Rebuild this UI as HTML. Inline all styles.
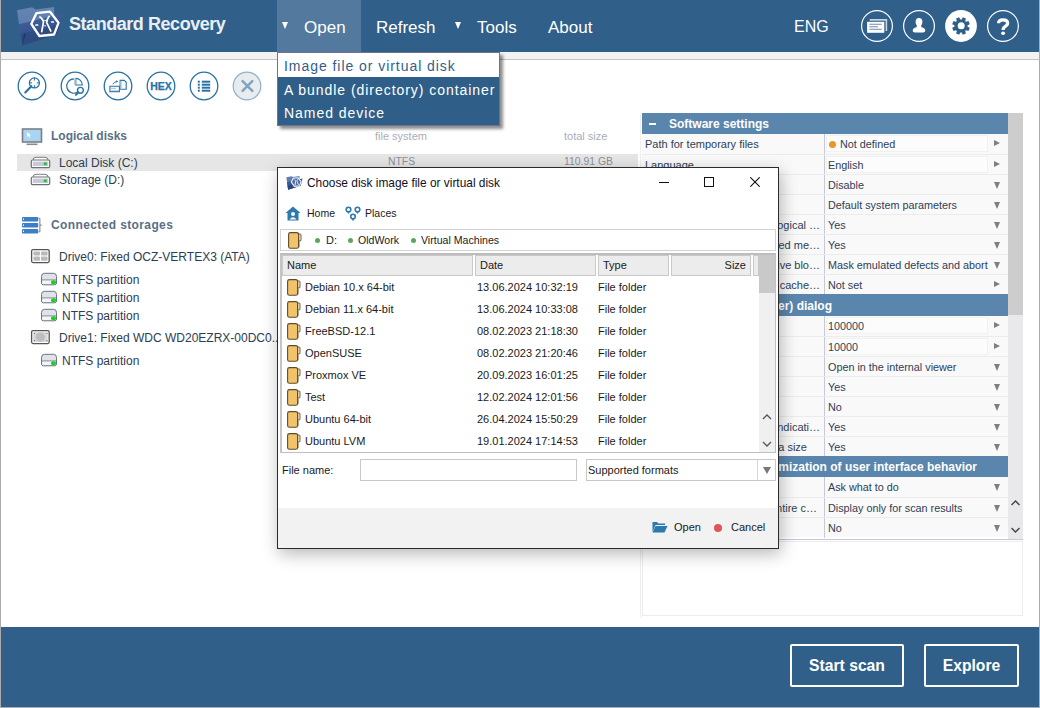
<!DOCTYPE html>
<html><head><meta charset="utf-8">
<style>
*{margin:0;padding:0;box-sizing:border-box}
html,body{width:1040px;height:708px;overflow:hidden;background:#fff;font-family:"Liberation Sans",sans-serif}
.a{position:absolute;white-space:pre}
#win{position:absolute;left:0;top:0;width:1040px;height:708px;background:#fff}
.bd{position:absolute;background:#ababab;z-index:50}
#hdr{position:absolute;left:0;top:0;width:1040px;height:52px;background:#305f89}
.menu{position:absolute;top:2px;height:52px;color:#fff;font-size:17px;line-height:52px;letter-spacing:0}
.tri{position:absolute;width:0;height:0;border-left:3.5px solid transparent;border-right:3.5px solid transparent;border-top:7px solid #fff}
.hc{position:absolute;top:10px;width:32px;height:32px;border-radius:50%;border:1.3px solid #fff}
#strip{position:absolute;left:0;top:52px;width:1040px;height:8px;background:#f2f2f2;border-bottom:1px solid #c4c4c4}
.tc{position:absolute;top:72px;width:29px;height:29px;border-radius:50%;border:1.4px solid #2e78aa}
.lp{color:#2b3d52;font-size:12px}
#foot{position:absolute;left:0;top:627px;width:1040px;height:80px;background:#305f89}
.btn{position:absolute;top:644px;height:43px;border:2px solid #fff;border-radius:2px;color:#fff;font-weight:bold;font-size:15.7px;line-height:40px;text-align:center}

#sp{position:absolute;left:642px;top:113px;width:381px;height:426px;background:#fff}
.sh{position:absolute;left:0;width:366px;height:21px;background:#5a86ae;color:#fff;font-weight:bold;font-size:12px;line-height:21px}
.sr{position:absolute;left:0;width:366px;height:20px;background:#f9f9f9;font-size:11px;line-height:21px;color:#2e4057}
.sl{position:absolute;left:3px;top:0;white-space:pre}
.slr{position:absolute;right:188px;top:0;white-space:pre}
.sv{position:absolute;left:186px;top:0;white-space:pre;font-size:10.8px}
.sa{position:absolute;left:352px;top:6px;width:0;height:0;border-top:3.5px solid transparent;border-bottom:3.5px solid transparent;border-left:6px solid #7f7f7f}
.sd{position:absolute;left:352px;top:7px;width:0;height:0;border-left:3.5px solid transparent;border-right:3.5px solid transparent;border-top:7px solid #7f7f7f}
.scol{position:absolute;left:182px;top:0;width:1px;height:20px;background:#c5cad6}

#dlg{position:absolute;left:277px;top:167px;width:502px;height:382px;background:#fff;border:1px solid #2b2b2b;box-shadow:2px 5px 16px rgba(0,0,0,0.28);z-index:20;font-size:11px;color:#1a1a1a}
#dlg .a{position:absolute;white-space:pre}
.fi{position:absolute;width:13px;height:16px;background:#f1c36b;border:1px solid #6e5a36;border-radius:2px 0 0 2px}
.fi:after{content:"";position:absolute;right:-4px;top:1px;width:2px;height:9px;border-right:1px solid #6e5a36}
.lr{position:absolute;left:0;width:477px;height:22px;line-height:22px}
.hcell{position:absolute;top:0;height:21px;background:#ececec;border:1px solid #c9c9c9;line-height:18px}
</style></head><body>
<div id="win">
  <div id="hdr">
    <!-- logo -->
    <svg class="a" style="left:14px;top:4px" width="52" height="44" viewBox="0 0 52 44">
      <defs>
        <linearGradient id="lg1" x1="0" y1="0" x2="0" y2="1"><stop offset="0" stop-color="#6585b4"/><stop offset="1" stop-color="#5474a8"/></linearGradient>
        <linearGradient id="lg2" x1="0" y1="0" x2="0.3" y2="1"><stop offset="0" stop-color="#4563a0"/><stop offset="1" stop-color="#2c4a83"/></linearGradient>
      </defs>
      <path d="M3 6.3 L18 3.3 L21.7 5.5 L40 3 L41 26 L8 41.5 Z" fill="url(#lg1)"/>
      <path d="M4.8 20.2 L48.9 9.6 L43 30.5 L8.1 41.5 Z" fill="url(#lg2)"/>
      <path d="M6.5 30 L46 20.5 L43 30.5 L8.1 41.5 Z" fill="#2d4a80" opacity="0.8"/>
      <path d="M8.1 41.5 L10 30 L12 29.5 Z" fill="#1e3566"/>
      <polygon points="17.3,19.9 22.4,9.2 36,7.7 44.5,18.8 40,30.5 25.4,32" fill="none" stroke="#fff" stroke-width="2.3" stroke-linejoin="round"/>
      <path d="M25.4 12.5 Q29.6 15.5 29.4 18.5 L27.6 28.3" fill="none" stroke="#fff" stroke-width="1.7"/>
      <path d="M35.6 11.8 Q32.5 15.5 32.7 18.5 L37.1 27.6" fill="none" stroke="#fff" stroke-width="1.7"/>
      <path d="M21.3 21 H24.3 M37.1 18 H40" stroke="#fff" stroke-width="1.5"/>
      <circle cx="31" cy="16.5" r="0.8" fill="#fff"/><circle cx="31" cy="21.7" r="0.8" fill="#fff"/>
    </svg>
    <div class="a" style="left:69px;top:12px;color:#e9eff6;font-weight:bold;font-size:18px;letter-spacing:-0.45px;line-height:24px">Standard Recovery</div>
    <div class="a" style="left:277px;top:0;width:84px;height:52px;background:#53799e"></div>
    <div class="tri" style="left:282px;top:22px"></div>
    <div class="menu" style="left:304px">Open</div>
    <div class="menu" style="left:376px">Refresh</div>
    <div class="tri" style="left:455px;top:22px"></div>
    <div class="menu" style="left:477px">Tools</div>
    <div class="menu" style="left:548px">About</div>
    <div class="menu" style="left:794px;top:1px;font-size:16px">ENG</div>
    <svg class="a" style="left:861px;top:10px" width="32" height="32" viewBox="0 0 32 32">
      <circle cx="16" cy="16" r="15.4" fill="none" stroke="#fff" stroke-width="1.2"/>
      <path d="M8.7 9.9 L25.4 9.9 L25.4 21" fill="none" stroke="#c9d3dd" stroke-width="1.6"/>
      <rect x="6.1" y="11.8" width="17.2" height="11" fill="#fff"/>
      <path d="M8.4 14.3 H20.7 M8.4 16.7 H17 M8.4 19.3 H20.7" stroke="#6d8cab" stroke-width="1.1"/>
    </svg>
    <svg class="a" style="left:903px;top:10px" width="32" height="32" viewBox="0 0 32 32">
      <circle cx="16" cy="16" r="15.4" fill="none" stroke="#fff" stroke-width="1.2"/>
      <ellipse cx="16" cy="12" rx="3.4" ry="3.9" fill="#fff"/>
      <path d="M14 15 L18 15 L18.5 17.2 Q22.3 18 22.3 20.7 Q22.3 22.4 20 22.4 L12 22.4 Q9.7 22.4 9.7 20.7 Q9.7 18 13.5 17.2 Z" fill="#fff"/>
    </svg>
    <svg class="a" style="left:945px;top:10px" width="32" height="32" viewBox="0 0 32 32">
      <circle cx="16" cy="16" r="15.9" fill="#fff"/>
      <path d="M22.57 16.68 L24.82 17.81 L23.51 20.95 L21.12 20.16 L20.16 21.12 L20.95 23.51 L17.81 24.82 L16.68 22.57 L15.32 22.57 L14.19 24.82 L11.05 23.51 L11.84 21.12 L10.88 20.16 L8.49 20.95 L7.18 17.81 L9.43 16.68 L9.43 15.32 L7.18 14.19 L8.49 11.05 L10.88 11.84 L11.84 10.88 L11.05 8.49 L14.19 7.18 L15.32 9.43 L16.68 9.43 L17.81 7.18 L20.95 8.49 L20.16 10.88 L21.12 11.84 L23.51 11.05 L24.82 14.19 L22.57 15.32 Z" fill="#305f89"/>
      <circle cx="16.2" cy="15.8" r="3.5" fill="#fff"/>
    </svg>
    <svg class="a" style="left:987px;top:10px" width="32" height="32" viewBox="0 0 32 32">
      <circle cx="16" cy="16" r="15.4" fill="none" stroke="#fff" stroke-width="1.2"/>
      <path d="M11.6 13.3 Q11.6 9.9 16.1 9.9 Q20.6 9.9 20.6 13.1 Q20.6 15.2 18.3 16.4 Q16.1 17.6 16.1 19.9" fill="none" stroke="#fff" stroke-width="3.2"/><ellipse cx="16.1" cy="23.2" rx="2" ry="1.8" fill="#fff"/>
    </svg>
  </div>
  <div id="strip"></div>

  <!-- toolbar -->
  <svg class="a" style="left:16.25px;top:70.3px" width="32" height="32" viewBox="0 0 32 32"><circle cx="16" cy="16" r="13.8" fill="none" stroke="#2a72a3" stroke-width="1.3"/><circle cx="18.4" cy="12.9" r="5" fill="none" stroke="#2a72a3" stroke-width="1.3"/><path d="M18.4 7.9 V10.6 M18.4 15.2 V17.9 M13.4 12.9 H16.1 M20.7 12.9 H23.4" stroke="#2a72a3" stroke-width="1"/><path d="M15.3 16.2 L9.3 22.4" stroke="#2a72a3" stroke-width="2.1" stroke-linecap="round"/></svg>
  <svg class="a" style="left:59.20px;top:70.3px" width="32" height="32" viewBox="0 0 32 32"><circle cx="16" cy="16" r="13.8" fill="none" stroke="#2a72a3" stroke-width="1.3"/><path d="M15 8.8 A7.2 7.2 0 1 0 18.8 22.1" fill="none" stroke="#2a72a3" stroke-width="1.2"/><path d="M16.8 8.4 L16.8 15 L23.3 15 A6.6 6.6 0 0 0 16.8 8.4 Z" fill="none" stroke="#2a72a3" stroke-width="1.1"/><rect x="15.4" y="8.3" width="1.6" height="6.8" fill="#8fb5d0"/><circle cx="21.4" cy="20.3" r="2.9" fill="none" stroke="#2a72a3" stroke-width="1.4"/><path d="M19.4 22.4 L16.9 24.8" stroke="#2a72a3" stroke-width="2" stroke-linecap="round"/></svg>
  <svg class="a" style="left:102.30px;top:70.3px" width="32" height="32" viewBox="0 0 32 32"><circle cx="16" cy="16" r="13.8" fill="none" stroke="#2a72a3" stroke-width="1.3"/><path d="M18.1 10.4 H22.3 L24.2 12.3 V19.3 H18.1 Z" fill="#fff" stroke="#2a72a3" stroke-width="1.1"/><rect x="18.6" y="10.9" width="1.6" height="8" fill="#c5dbe9"/><path d="M7.9 16.2 H17.4 V21.6 H7.9 Z" fill="#fff" stroke="#2a72a3" stroke-width="1.1"/><path d="M8.4 18.3 H14 M8.4 20.8 H17" stroke="#9cc0d8" stroke-width="1"/><path d="M10.8 14.2 Q12.3 11.9 14.6 11.5" fill="none" stroke="#2a72a3" stroke-width="1"/><path d="M14 10.3 L16.3 11.2 L14.3 12.8 Z" fill="#2a72a3"/></svg>
  <svg class="a" style="left:145.20px;top:70.3px" width="32" height="32" viewBox="0 0 32 32"><circle cx="16" cy="16" r="13.8" fill="none" stroke="#2a72a3" stroke-width="1.3"/><text x="16" y="19.9" text-anchor="middle" font-family="Liberation Sans" font-weight="bold" font-size="10.5" fill="#2a72a3" stroke="#2a72a3" stroke-width="0.25">HEX</text></svg>
  <svg class="a" style="left:188.20px;top:70.3px" width="32" height="32" viewBox="0 0 32 32"><circle cx="16" cy="16" r="13.8" fill="none" stroke="#2a72a3" stroke-width="1.3"/><rect x="9.8" y="10.7" width="2" height="2" fill="#2a72a3"/><rect x="13.8" y="10.7" width="8.4" height="2" fill="#2a72a3"/><rect x="9.8" y="13.7" width="2" height="2" fill="#2a72a3"/><rect x="13.8" y="13.7" width="8.4" height="2" fill="#2a72a3"/><rect x="9.8" y="16.7" width="2" height="2" fill="#2a72a3"/><rect x="13.8" y="16.7" width="8.4" height="2" fill="#2a72a3"/><rect x="9.8" y="19.7" width="2" height="2" fill="#2a72a3"/><rect x="13.8" y="19.7" width="8.4" height="2" fill="#2a72a3"/></svg>
  <svg class="a" style="left:231.20px;top:70.3px" width="32" height="32" viewBox="0 0 32 32"><circle cx="16" cy="16" r="13.8" fill="#e9ecef" stroke="#8fb2ca" stroke-width="1.2"/><path d="M11.6 11.2 L21.3 20.9 M21.3 11.2 L11.6 20.9" stroke="#7ea5c0" stroke-width="2.5" stroke-linecap="round"/></svg>

  <!-- left panel -->
  <div class="a" style="left:51px;top:129px;font-weight:bold;font-size:12px;color:#5b6f84">Logical disks</div>
  <div class="a" style="left:375px;top:130px;font-size:11px;color:#a9adb7">file system</div>
  <div class="a" style="left:564px;top:130px;font-size:11px;color:#a9adb7">total size</div>
  <div class="a" style="left:17px;top:154px;width:621px;height:17px;background:#e6e6e6"></div>
  <div class="a lp" style="left:59px;top:156px">Local Disk (C:)</div>
  <div class="a" style="left:388px;top:156px;font-size:10.4px;color:#8a909b">NTFS</div>
  <div class="a" style="left:564px;top:156px;font-size:10.4px;color:#8a909b">110.91 GB</div>
  <div class="a lp" style="left:59px;top:173px">Storage (D:)</div>
  <div class="a" style="left:51px;top:218px;font-weight:bold;font-size:12px;letter-spacing:0.38px;color:#5b6f84">Connected storages</div>
  <div class="a lp" style="left:59px;top:250px">Drive0: Fixed OCZ-VERTEX3 (ATA)</div>
  <div class="a lp" style="left:62px;top:273px">NTFS partition</div>
  <div class="a lp" style="left:62px;top:291px">NTFS partition</div>
  <div class="a lp" style="left:62px;top:309px">NTFS partition</div>
  <div class="a lp" style="left:59px;top:331px">Drive1: Fixed WDC WD20EZRX-00DC0...</div>
  <div class="a lp" style="left:62px;top:354px">NTFS partition</div>



  <!-- left icons -->
  <svg class="a" style="left:21px;top:128px" width="22" height="19" viewBox="0 0 22 19">
    <rect x="1.5" y="1" width="19" height="13" fill="#a9d5f3" stroke="#7c7f87" stroke-width="1.6"/>
    <path d="M5.5 16.3 H16.5" stroke="#8a8d94" stroke-width="1.6"/>
    <path d="M6 4 L6 9 L7.4 7.8 L8.6 10 L9.3 9.6 L8.3 7.4 L10 7.2 Z" fill="#fff"/>
  </svg>
  <svg class="a" style="left:30px;top:156px" width="22" height="13" viewBox="0 0 22 13">
    <path d="M3 4 Q3 1.3 6 1.3 H15 Q18 1.3 18 4" fill="#fff" stroke="#7b7e88" stroke-width="1"/>
    <rect x="1.3" y="4" width="18.4" height="7.6" rx="1.3" fill="#fff" stroke="#6d707a" stroke-width="1.2"/>
    <rect x="2.8" y="5.6" width="15.4" height="4.4" fill="#c8c9d6"/>
    <rect x="13.8" y="6.4" width="3" height="2.8" fill="#26c33a"/>
  </svg>
  <svg class="a" style="left:30px;top:173px" width="22" height="13" viewBox="0 0 22 13">
    <path d="M3 4 Q3 1.3 6 1.3 H15 Q18 1.3 18 4" fill="#fff" stroke="#7b7e88" stroke-width="1"/>
    <rect x="1.3" y="4" width="18.4" height="7.6" rx="1.3" fill="#fff" stroke="#6d707a" stroke-width="1.2"/>
    <rect x="2.8" y="5.6" width="15.4" height="4.4" fill="#c8c9d6"/>
    <rect x="13.8" y="6.4" width="3" height="2.8" fill="#26c33a"/>
  </svg>
  <svg class="a" style="left:21px;top:216px" width="22" height="19" viewBox="0 0 22 19">
    <rect x="1" y="1" width="16.2" height="4.5" rx="0.8" fill="#3d7fc6"/>
    <rect x="1" y="7" width="16.2" height="4.5" rx="0.8" fill="#3d7fc6"/>
    <rect x="1" y="13" width="16.2" height="4.5" rx="0.8" fill="#3d7fc6"/>
    <rect x="2" y="2.5" width="1" height="1.5" fill="#fff"/><rect x="2" y="8.5" width="1" height="1.5" fill="#fff"/><rect x="2" y="14.5" width="1" height="1.5" fill="#fff"/>
    <path d="M17.5 2.3 H18.9 V15.8 H17.5 M18.9 9.1 H20.8" fill="none" stroke="#7a7a88" stroke-width="1"/>
  </svg>
  <svg class="a" style="left:30px;top:248px" width="21" height="16" viewBox="0 0 21 16">
    <rect x="1.6" y="1.6" width="17.6" height="13" rx="1.5" fill="#fff" stroke="#555" stroke-width="1.3"/>
    <rect x="3.4" y="3.4" width="6.6" height="4.2" rx="1" fill="#b9b9b9"/><rect x="11" y="3.4" width="6.6" height="4.2" rx="1" fill="#b9b9b9"/>
    <rect x="3.4" y="8.6" width="6.6" height="4.2" rx="1" fill="#b9b9b9"/><rect x="11" y="8.6" width="6.6" height="4.2" rx="1" fill="#b9b9b9"/>
  </svg>
  <svg class="a" style="left:30px;top:329px" width="21" height="16" viewBox="0 0 21 16">
    <rect x="1.6" y="1.6" width="17.6" height="13" rx="1.5" fill="#fff" stroke="#555" stroke-width="1.3"/>
    <rect x="3.2" y="3.2" width="14.4" height="9.8" fill="#d8d8d8"/>
    <circle cx="10.4" cy="8.1" r="4.6" fill="#bdbdc2" stroke="#c9c9cc" stroke-width="0.6"/>
    <circle cx="4.5" cy="4.5" r="0.6" fill="#666"/><circle cx="17" cy="4.5" r="0.6" fill="#666"/><circle cx="4.5" cy="11.7" r="0.6" fill="#666"/><circle cx="17" cy="11.7" r="0.6" fill="#666"/>
  </svg>
  <svg class="a" style="left:40px;top:272px" width="18" height="14" viewBox="0 0 18 14">
    <path d="M1.5 11 V4.5 Q1.5 1.3 4.5 1.3 H13.5 Q16.5 1.3 16.5 4.5 V11 Q16.5 12.8 14.5 12.8 H3.5 Q1.5 12.8 1.5 11 Z" fill="#dfe2ea" stroke="#6f7380" stroke-width="1"/>
    <path d="M1.5 8 H16.5" stroke="#6f7380" stroke-width="0.9"/>
    <rect x="2.3" y="8.6" width="13.4" height="3.3" fill="#f4f5f8"/>
    <rect x="11" y="8.3" width="5" height="4" rx="1.8" fill="#16d31d"/>
  </svg>
  <svg class="a" style="left:40px;top:290px" width="18" height="14" viewBox="0 0 18 14">
    <path d="M1.5 11 V4.5 Q1.5 1.3 4.5 1.3 H13.5 Q16.5 1.3 16.5 4.5 V11 Q16.5 12.8 14.5 12.8 H3.5 Q1.5 12.8 1.5 11 Z" fill="#dfe2ea" stroke="#6f7380" stroke-width="1"/>
    <path d="M1.5 8 H16.5" stroke="#6f7380" stroke-width="0.9"/>
    <rect x="2.3" y="8.6" width="13.4" height="3.3" fill="#f4f5f8"/>
    <rect x="11" y="8.3" width="5" height="4" rx="1.8" fill="#16d31d"/>
  </svg>
  <svg class="a" style="left:40px;top:308px" width="18" height="14" viewBox="0 0 18 14">
    <path d="M1.5 11 V4.5 Q1.5 1.3 4.5 1.3 H13.5 Q16.5 1.3 16.5 4.5 V11 Q16.5 12.8 14.5 12.8 H3.5 Q1.5 12.8 1.5 11 Z" fill="#dfe2ea" stroke="#6f7380" stroke-width="1"/>
    <path d="M1.5 8 H16.5" stroke="#6f7380" stroke-width="0.9"/>
    <rect x="2.3" y="8.6" width="13.4" height="3.3" fill="#f4f5f8"/>
    <rect x="11" y="8.3" width="5" height="4" rx="1.8" fill="#16d31d"/>
  </svg>
  <svg class="a" style="left:40px;top:353px" width="18" height="14" viewBox="0 0 18 14">
    <path d="M1.5 11 V4.5 Q1.5 1.3 4.5 1.3 H13.5 Q16.5 1.3 16.5 4.5 V11 Q16.5 12.8 14.5 12.8 H3.5 Q1.5 12.8 1.5 11 Z" fill="#dfe2ea" stroke="#6f7380" stroke-width="1"/>
    <path d="M1.5 8 H16.5" stroke="#6f7380" stroke-width="0.9"/>
    <rect x="2.3" y="8.6" width="13.4" height="3.3" fill="#f4f5f8"/>
    <rect x="11" y="8.3" width="5" height="4" rx="1.8" fill="#16d31d"/>
  </svg>

  <!-- settings panel -->
  <div id="sp">
    <div class="sh" style="top:0px"><span style="position:absolute;left:7px;top:10px;width:7px;height:2.4px;background:#fff"></span><span style="position:absolute;left:27px;top:1px">Software settings</span></div>
    <div class="sr" style="top:21px"><span class="sl">Path for temporary files</span><span class="scol"></span><span style="position:absolute;left:184px;top:1px;width:162px;height:17px;background:#fcfcfc;border:1px solid #f1f1f1"></span><span style="position:absolute;left:187px;top:7px;width:7px;height:7px;border-radius:50%;background:#e8962e"></span><span class="sv" style="left:198px">Not defined</span><span class="sa"></span></div>
    <div class="sr" style="top:41px;border-top:1px solid #ececec"><span class="sl">Language</span><span class="scol"></span><span style="position:absolute;left:184px;top:1px;width:162px;height:17px;background:#fcfcfc;border:1px solid #f1f1f1"></span><span class="sv" >English</span><span class="sa"></span></div>
    <div class="sr" style="top:61px;border-top:1px solid #ececec"><span class="sl"></span><span class="scol"></span><span class="sv" >Disable</span><span class="sd"></span></div>
    <div class="sr" style="top:81px;border-top:1px solid #ececec"><span class="sl"></span><span class="scol"></span><span class="sv" >Default system parameters</span><span class="sd"></span></div>
    <div class="sr" style="top:101px;border-top:1px solid #ececec"><span class="slr">Scan physical and logical &#8230;</span><span class="scol"></span><span class="sv" >Yes</span><span class="sd"></span></div>
    <div class="sr" style="top:121px;border-top:1px solid #ececec"><span class="slr">Show encrypted me&#8230;</span><span class="scol"></span><span class="sv" >Yes</span><span class="sd"></span></div>
    <div class="sr" style="top:141px;border-top:1px solid #ececec"><span class="slr">Skip bad drive blo&#8230;</span><span class="scol"></span><span class="sv" >Mask emulated defects and abort</span><span class="sd"></span></div>
    <div class="sr" style="top:161px;border-top:1px solid #ececec"><span class="slr">Use disk cache&#8230;</span><span class="scol"></span><span class="sv" >Not set</span><span class="sa"></span></div>
    <div class="sh" style="top:181px;height:22px;line-height:22px"><span style="position:absolute;right:176px;top:1px;white-space:pre">Settings for file (explorer) dialog</span></div>
    <div class="sr" style="top:203px"><span class="sl"></span><span class="scol"></span><span style="position:absolute;left:184px;top:1px;width:162px;height:17px;background:#fcfcfc;border:1px solid #f1f1f1"></span><span class="sv" >100000</span><span class="sa"></span></div>
    <div class="sr" style="top:223px;border-top:1px solid #ececec"><span class="sl"></span><span class="scol"></span><span style="position:absolute;left:184px;top:1px;width:162px;height:17px;background:#fcfcfc;border:1px solid #f1f1f1"></span><span class="sv" >10000</span><span class="sa"></span></div>
    <div class="sr" style="top:243px;border-top:1px solid #ececec"><span class="sl"></span><span class="scol"></span><span class="sv" >Open in the internal viewer</span><span class="sd"></span></div>
    <div class="sr" style="top:263px;border-top:1px solid #ececec"><span class="sl"></span><span class="scol"></span><span class="sv" >Yes</span><span class="sd"></span></div>
    <div class="sr" style="top:283px;border-top:1px solid #ececec"><span class="sl"></span><span class="scol"></span><span class="sv" >No</span><span class="sd"></span></div>
    <div class="sr" style="top:303px;border-top:1px solid #ececec"><span class="slr">Show progress indicati&#8230;</span><span class="scol"></span><span class="sv" >Yes</span><span class="sd"></span></div>
    <div class="sr" style="top:323px;border-top:1px solid #ececec"><span class="slr" style="right:201px">Show data size</span><span class="scol"></span><span class="sv" >Yes</span><span class="sd"></span></div>
    <div class="sh" style="top:343px;height:21px;line-height:21px"><span style="position:absolute;right:31px;top:1px;white-space:pre">Customization of user interface behavior</span></div>
    <div class="sr" style="top:364px"><span class="sl"></span><span class="scol"></span><span class="sv" >Ask what to do</span><span class="sd"></span></div>
    <div class="sr" style="top:384px;border-top:1px solid #ececec"><span class="slr" style="right:191px">Apply to entire c&#8230;</span><span class="scol"></span><span class="sv" >Display only for scan results</span><span class="sd"></span></div>
    <div class="sr" style="top:404px;border-top:1px solid #ececec"><span class="sl"></span><span class="scol"></span><span class="sv" >No</span><span class="sd"></span></div>
    <div class="a" style="left:366px;top:0;width:15px;height:426px;background:#e9e9ec"></div>
    <div class="a" style="left:366px;top:0;width:15px;height:202px;background:#cdcdcd"></div>
    <svg class="a" style="left:368px;top:386px" width="11" height="8" viewBox="0 0 11 8"><path d="M1.5 6 L5.5 2 L9.5 6" fill="none" stroke="#444" stroke-width="1.4"/></svg>
    <svg class="a" style="left:368px;top:413px" width="11" height="8" viewBox="0 0 11 8"><path d="M1.5 2 L5.5 6 L9.5 2" fill="none" stroke="#444" stroke-width="1.4"/></svg>
    <div class="a" style="left:0;top:426px;width:381px;height:1px;background:#c9c6dc"></div>
  </div>
  <div class="a" style="left:642px;top:541px;width:381px;height:75px;border:1px solid #ececec"></div>
  <div class="a" style="left:640px;top:113px;width:1px;height:504px;background:#efefef"></div>

  <!-- dialog -->
  <div id="dlg">
    <svg class="a" style="left:8px;top:7px" width="17" height="16" viewBox="2 2 48 41">
      <path d="M3 6.3 L18 3.3 L21.7 5.5 L40 3 L41 26 L8 41.5 Z" fill="#5d7fb0"/>
      <path d="M4.8 20.2 L48.9 9.6 L43 30.5 L8.1 41.5 Z" fill="#3a5994"/>
      <path d="M6.5 30 L46 20.5 L43 30.5 L8.1 41.5 Z" fill="#2a467c"/>
      <polygon points="17.3,19.9 22.4,9.2 36,7.7 44.5,18.8 40,30.5 25.4,32" fill="#4a6aa0" stroke="#eef2f8" stroke-width="3.2" stroke-linejoin="round"/>
      <path d="M25.4 12.5 Q29.6 15.5 28.9 18.5 L27.6 28.3 M35.6 11.8 Q32.5 15.5 33.2 18.5 L37.1 27.6" fill="none" stroke="#fff" stroke-width="2.6"/>
    </svg>
    <div class="a" style="left:29px;top:8px;font-size:11.9px;color:#0f0f1e">Choose disk image file or virtual disk</div>
    <div class="a" style="left:381px;top:14px;width:10px;height:1px;background:#111"></div>
    <div class="a" style="left:426px;top:9px;width:10px;height:10px;border:1px solid #111"></div>
    <svg class="a" style="left:472px;top:9px" width="10" height="10" viewBox="0 0 10 10"><path d="M0.3 0.3 L9.7 9.7 M9.7 0.3 L0.3 9.7" stroke="#111" stroke-width="1.1"/></svg>

    <svg class="a" style="left:7px;top:38px" width="16" height="15" viewBox="0 0 16 15">
      <path d="M8 0.5 L15.5 7 L13.5 7 L13.5 14.5 L2.5 14.5 L2.5 7 L0.5 7 Z" fill="#2b79ad"/>
      <circle cx="8" cy="8" r="2" fill="#fff"/><path d="M4.5 13.5 Q8 9 11.5 13.5 Z" fill="#fff"/>
    </svg>
    <div class="a" style="left:29px;top:39px;font-size:10.5px">Home</div>
    <svg class="a" style="left:67px;top:38px" width="16" height="16" viewBox="0 0 16 16">
      <g fill="none" stroke="#2b79ad" stroke-width="1.6"><circle cx="3.5" cy="3.5" r="2.3"/><circle cx="12.5" cy="3.5" r="2.3"/><circle cx="8" cy="10.5" r="2.3"/></g>
      <path d="M2.2 5.5 L3.5 8 L4.8 5.5 Z M11.2 5.5 L12.5 8 L13.8 5.5 Z M6.7 12.5 L8 15.5 L9.3 12.5 Z" fill="#2b79ad"/>
    </svg>
    <div class="a" style="left:87px;top:39px;font-size:10.5px">Places</div>

    <div class="a" style="left:2px;top:61px;width:496px;height:22px;border:1px solid #d2d2d2"></div>
    <svg class="a" style="left:10px;top:64px" width="14" height="17" viewBox="0 0 14 17"><path d="M10.3 1.6 L13 2.4 V8.6 L10.3 9.2 Z" fill="#ece2c4" stroke="#6a5634" stroke-width="0.9"/><path d="M11 9.5 V15.3" stroke="#8a8a8a" stroke-width="1.2"/><rect x="0.6" y="0.6" width="10" height="15.6" rx="1.8" fill="#f1c36b" stroke="#5f4c2d" stroke-width="1.1"/></svg>
    <span class="a" style="left:37px;top:70px;width:5px;height:5px;border-radius:50%;background:#5aa661"></span>
    <div class="a" style="left:48px;top:66px">D:</div>
    <span class="a" style="left:70px;top:70px;width:5px;height:5px;border-radius:50%;background:#5aa661"></span>
    <div class="a" style="left:80px;top:66px;font-size:10.6px">OldWork</div>
    <span class="a" style="left:133px;top:70px;width:5px;height:5px;border-radius:50%;background:#5aa661"></span>
    <div class="a" style="left:143px;top:66px;font-size:10.6px">Virtual Machines</div>

    <div class="a" style="left:2px;top:85px;width:496px;height:200px;border:1px solid #c0c0c0;border-top:2px solid #bdbdbd;border-left:2px solid #c4c4c4;overflow:hidden">
      <div class="hcell" style="left:0;width:191px"><span class="a" style="left:4px">Name</span></div>
      <div class="hcell" style="left:193px;width:121px"><span class="a" style="left:4px">Date</span></div>
      <div class="hcell" style="left:316px;width:71px"><span class="a" style="left:4px">Type</span></div>
      <div class="hcell" style="left:389px;width:80px"><span class="a" style="right:4px">Size</span></div>
      <div class="hcell" style="left:471px;width:6px"></div>
      <div class="lr" style="top:21px"><svg class="a" style="left:5px;top:3px" width="14" height="17" viewBox="0 0 14 17"><path d="M10.3 1.6 L13 2.4 V8.6 L10.3 9.2 Z" fill="#ece2c4" stroke="#6a5634" stroke-width="0.9"/><path d="M11 9.5 V15.3" stroke="#8a8a8a" stroke-width="1.2"/><rect x="0.6" y="0.6" width="10" height="15.6" rx="1.8" fill="#f1c36b" stroke="#5f4c2d" stroke-width="1.1"/></svg><span class="a" style="left:23px">Debian 10.x 64-bit</span><span class="a" style="left:195px">13.06.2024 10:32:19</span><span class="a" style="left:316px">File folder</span></div>
      <div class="lr" style="top:43px"><svg class="a" style="left:5px;top:3px" width="14" height="17" viewBox="0 0 14 17"><path d="M10.3 1.6 L13 2.4 V8.6 L10.3 9.2 Z" fill="#ece2c4" stroke="#6a5634" stroke-width="0.9"/><path d="M11 9.5 V15.3" stroke="#8a8a8a" stroke-width="1.2"/><rect x="0.6" y="0.6" width="10" height="15.6" rx="1.8" fill="#f1c36b" stroke="#5f4c2d" stroke-width="1.1"/></svg><span class="a" style="left:23px">Debian 11.x 64-bit</span><span class="a" style="left:195px">13.06.2024 10:33:08</span><span class="a" style="left:316px">File folder</span></div>
      <div class="lr" style="top:65px"><svg class="a" style="left:5px;top:3px" width="14" height="17" viewBox="0 0 14 17"><path d="M10.3 1.6 L13 2.4 V8.6 L10.3 9.2 Z" fill="#ece2c4" stroke="#6a5634" stroke-width="0.9"/><path d="M11 9.5 V15.3" stroke="#8a8a8a" stroke-width="1.2"/><rect x="0.6" y="0.6" width="10" height="15.6" rx="1.8" fill="#f1c36b" stroke="#5f4c2d" stroke-width="1.1"/></svg><span class="a" style="left:23px">FreeBSD-12.1</span><span class="a" style="left:195px">08.02.2023 21:18:30</span><span class="a" style="left:316px">File folder</span></div>
      <div class="lr" style="top:87px"><svg class="a" style="left:5px;top:3px" width="14" height="17" viewBox="0 0 14 17"><path d="M10.3 1.6 L13 2.4 V8.6 L10.3 9.2 Z" fill="#ece2c4" stroke="#6a5634" stroke-width="0.9"/><path d="M11 9.5 V15.3" stroke="#8a8a8a" stroke-width="1.2"/><rect x="0.6" y="0.6" width="10" height="15.6" rx="1.8" fill="#f1c36b" stroke="#5f4c2d" stroke-width="1.1"/></svg><span class="a" style="left:23px">OpenSUSE</span><span class="a" style="left:195px">08.02.2023 21:20:46</span><span class="a" style="left:316px">File folder</span></div>
      <div class="lr" style="top:109px"><svg class="a" style="left:5px;top:3px" width="14" height="17" viewBox="0 0 14 17"><path d="M10.3 1.6 L13 2.4 V8.6 L10.3 9.2 Z" fill="#ece2c4" stroke="#6a5634" stroke-width="0.9"/><path d="M11 9.5 V15.3" stroke="#8a8a8a" stroke-width="1.2"/><rect x="0.6" y="0.6" width="10" height="15.6" rx="1.8" fill="#f1c36b" stroke="#5f4c2d" stroke-width="1.1"/></svg><span class="a" style="left:23px">Proxmox VE</span><span class="a" style="left:195px">20.09.2023 16:01:25</span><span class="a" style="left:316px">File folder</span></div>
      <div class="lr" style="top:131px"><svg class="a" style="left:5px;top:3px" width="14" height="17" viewBox="0 0 14 17"><path d="M10.3 1.6 L13 2.4 V8.6 L10.3 9.2 Z" fill="#ece2c4" stroke="#6a5634" stroke-width="0.9"/><path d="M11 9.5 V15.3" stroke="#8a8a8a" stroke-width="1.2"/><rect x="0.6" y="0.6" width="10" height="15.6" rx="1.8" fill="#f1c36b" stroke="#5f4c2d" stroke-width="1.1"/></svg><span class="a" style="left:23px">Test</span><span class="a" style="left:195px">12.02.2024 12:01:56</span><span class="a" style="left:316px">File folder</span></div>
      <div class="lr" style="top:153px"><svg class="a" style="left:5px;top:3px" width="14" height="17" viewBox="0 0 14 17"><path d="M10.3 1.6 L13 2.4 V8.6 L10.3 9.2 Z" fill="#ece2c4" stroke="#6a5634" stroke-width="0.9"/><path d="M11 9.5 V15.3" stroke="#8a8a8a" stroke-width="1.2"/><rect x="0.6" y="0.6" width="10" height="15.6" rx="1.8" fill="#f1c36b" stroke="#5f4c2d" stroke-width="1.1"/></svg><span class="a" style="left:23px">Ubuntu 64-bit</span><span class="a" style="left:195px">26.04.2024 15:50:29</span><span class="a" style="left:316px">File folder</span></div>
      <div class="lr" style="top:175px"><svg class="a" style="left:5px;top:3px" width="14" height="17" viewBox="0 0 14 17"><path d="M10.3 1.6 L13 2.4 V8.6 L10.3 9.2 Z" fill="#ece2c4" stroke="#6a5634" stroke-width="0.9"/><path d="M11 9.5 V15.3" stroke="#8a8a8a" stroke-width="1.2"/><rect x="0.6" y="0.6" width="10" height="15.6" rx="1.8" fill="#f1c36b" stroke="#5f4c2d" stroke-width="1.1"/></svg><span class="a" style="left:23px">Ubuntu LVM</span><span class="a" style="left:195px">19.01.2024 17:14:53</span><span class="a" style="left:316px">File folder</span></div>
      <div class="a" style="left:477px;top:0;width:16px;height:198px;background:#f0f0f0"></div>
      <div class="a" style="left:477px;top:0;width:16px;height:38px;background:#c9c9c9"></div>
      <svg class="a" style="left:480px;top:158px" width="10" height="8" viewBox="0 0 10 8"><path d="M1 6 L5 2 L9 6" fill="none" stroke="#555" stroke-width="1.3"/></svg>
      <svg class="a" style="left:480px;top:185px" width="10" height="8" viewBox="0 0 10 8"><path d="M1 2 L5 6 L9 2" fill="none" stroke="#555" stroke-width="1.3"/></svg>
    </div>

    <div class="a" style="left:4px;top:296px">File name:</div>
    <div class="a" style="left:82px;top:291px;width:217px;height:22px;border:1px solid #c8c8c8"></div>
    <div class="a" style="left:308px;top:291px;width:190px;height:22px;border:1px solid #c8c8c8"></div>
    <div class="a" style="left:310px;top:296px">Supported formats</div>
    <div class="a" style="left:479px;top:292px;width:1px;height:20px;background:#d6d6d6"></div>
    <span class="a" style="left:485px;top:299px;width:0;height:0;border-left:4px solid transparent;border-right:4px solid transparent;border-top:7px solid #777"></span>

    <div class="a" style="left:0;top:340px;width:500px;height:40px;background:#f2f2f2"></div>
    <svg class="a" style="left:374px;top:353px" width="16" height="12" viewBox="0 0 16 12">
      <path d="M0.5 1 L5 1 L6.5 2.5 L13 2.5 L13 4 L3.5 4 L0.5 11 Z" fill="#2b79ad"/>
      <path d="M3.5 5 L15.5 5 L12.5 11.5 L0.5 11.5 Z" fill="#2b79ad"/>
    </svg>
    <div class="a" style="left:396px;top:353px">Open</div>
    <span class="a" style="left:436px;top:356px;width:8px;height:8px;border-radius:50%;background:#de5656"></span>
    <div class="a" style="left:453px;top:353px">Cancel</div>
  </div>


  <!-- dropdown -->
  <div class="a" style="left:277px;top:52px;width:223px;height:74px;background:#2f5f89;border:1px solid #6f7391;box-shadow:3px 3px 3px rgba(0,0,0,0.45);z-index:30">
    <div class="a" style="left:0;top:0;width:221px;height:24px;background:#fff"></div>
    <div class="a" style="left:6px;top:4px;font-size:14px;letter-spacing:0.95px;color:#2f5f89;line-height:18px">Image file or virtual disk</div>
    <div class="a" style="left:6px;top:28px;font-size:14px;letter-spacing:0.95px;color:#fff;line-height:18px">A bundle (directory) container</div>
    <div class="a" style="left:6px;top:51px;font-size:14px;letter-spacing:0.95px;color:#fff;line-height:18px">Named device</div>
  </div>

  <!-- footer -->
  <div id="foot"></div>
  <div class="btn" style="left:790px;width:114px">Start scan</div>
  <div class="btn" style="left:924px;width:95px">Explore</div>
  <div class="bd" style="left:0;top:0;width:1px;height:708px"></div>
  <div class="bd" style="left:1039px;top:0;width:1px;height:708px"></div>
  <div class="bd" style="left:0;top:707px;width:1040px;height:1px"></div>
</div>
</body></html>
